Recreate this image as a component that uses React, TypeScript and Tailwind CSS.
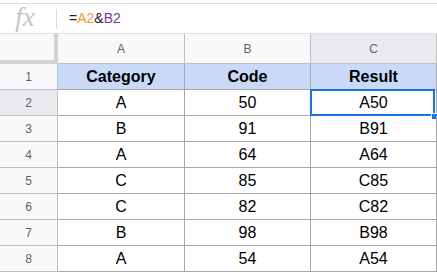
const rows: [string, string, string][] = [
  ["A", "50", "A50"],
  ["B", "91", "B91"],
  ["A", "64", "A64"],
  ["C", "85", "C85"],
  ["C", "82", "C82"],
  ["B", "98", "B98"],
  ["A", "54", "A54"],
];

export default function App() {
  return (
    <div className="w-[437px] h-[273px] overflow-hidden bg-white" style={{ fontFamily: "'Liberation Sans', Arial, sans-serif" }}>
      <div className="h-[3px]" />
      {/* formula bar */}
      <div className="flex items-center h-[31px] border-y border-[#e0e0e0]">
        <div className="w-[56px] flex items-center justify-center pr-[6px]">
          <span className="text-[27px] italic text-[#c6c6c6] leading-none -mt-[3px]" style={{ fontFamily: "'Liberation Serif', serif" }}>fx</span>
        </div>
        <div className="w-px h-[20px] bg-[#dadada]" />
        <div className="pl-[12px] text-[14px] text-[#222]">
          =<span className="text-[#f7981d]">A2</span>&amp;<span className="text-[#7e3794]">B2</span>
        </div>
      </div>

      {/* column header row */}
      <div className="grid grid-cols-[58px_127px_126px_126px] h-[30px]">
        <div className="relative bg-[#f8f9fa] border-r-[4px] border-b-[4px] border-[#d3d3d3]" />
        <div className="flex items-center justify-center bg-[#f8f9fa] border-r border-b border-[#c0c0c0] text-[12px] text-[#5f6368]">A</div>
        <div className="flex items-center justify-center bg-[#f8f9fa] border-r border-b border-[#c0c0c0] text-[12px] text-[#5f6368]">B</div>
        <div className="flex items-center justify-center bg-[#e8eaed] border-r border-b border-[#c0c0c0] text-[12px] text-[#5f6368]">C</div>
      </div>

      {/* header data row */}
      <div className="grid grid-cols-[58px_127px_126px_126px] h-[26px]">
        <div className="flex items-center justify-center bg-[#f8f9fa] border-r border-b border-[#c0c0c0] text-[12px] text-[#5f6368]">1</div>
        <div className="flex items-center justify-center pt-px bg-[#c9daf8] border-r border-b border-[#a8a8a8] text-[16px] font-bold text-black">Category</div>
        <div className="flex items-center justify-center pt-px bg-[#c9daf8] border-r border-b border-[#a8a8a8] text-[16px] font-bold text-black">Code</div>
        <div className="flex items-center justify-center pt-px bg-[#c9daf8] border-r border-b border-[#a8a8a8] text-[16px] font-bold text-black">Result</div>
      </div>

      {rows.map((r, i) => (
        <div key={i} className="grid grid-cols-[58px_127px_126px_126px] h-[26px]">
          <div className={`flex items-center justify-center border-r border-b border-[#c0c0c0] text-[12px] text-[#5f6368] ${i === 0 ? "bg-[#e8eaed]" : "bg-[#f8f9fa]"}`}>{i + 2}</div>
          <div className="flex items-center justify-center pt-px border-r border-b border-[#a8a8a8] text-[16px] text-black">{r[0]}</div>
          <div className="flex items-center justify-center pt-px border-r border-b border-[#a8a8a8] text-[16px] text-black">{r[1]}</div>
          <div className="relative flex items-center justify-center pt-px border-r border-b border-[#a8a8a8] text-[16px] text-black">
            {r[2]}
            {i === 0 && (
              <>
                <div className="absolute -left-px -top-px right-[1px] bottom-[-1px] border-2 border-[#1a73e8]" />
                <div className="absolute right-[-2px] bottom-[-5px] w-[7px] h-[7px] bg-[#1a73e8] border border-white" />
              </>
            )}
          </div>
        </div>
      ))}
    </div>
  );
}
